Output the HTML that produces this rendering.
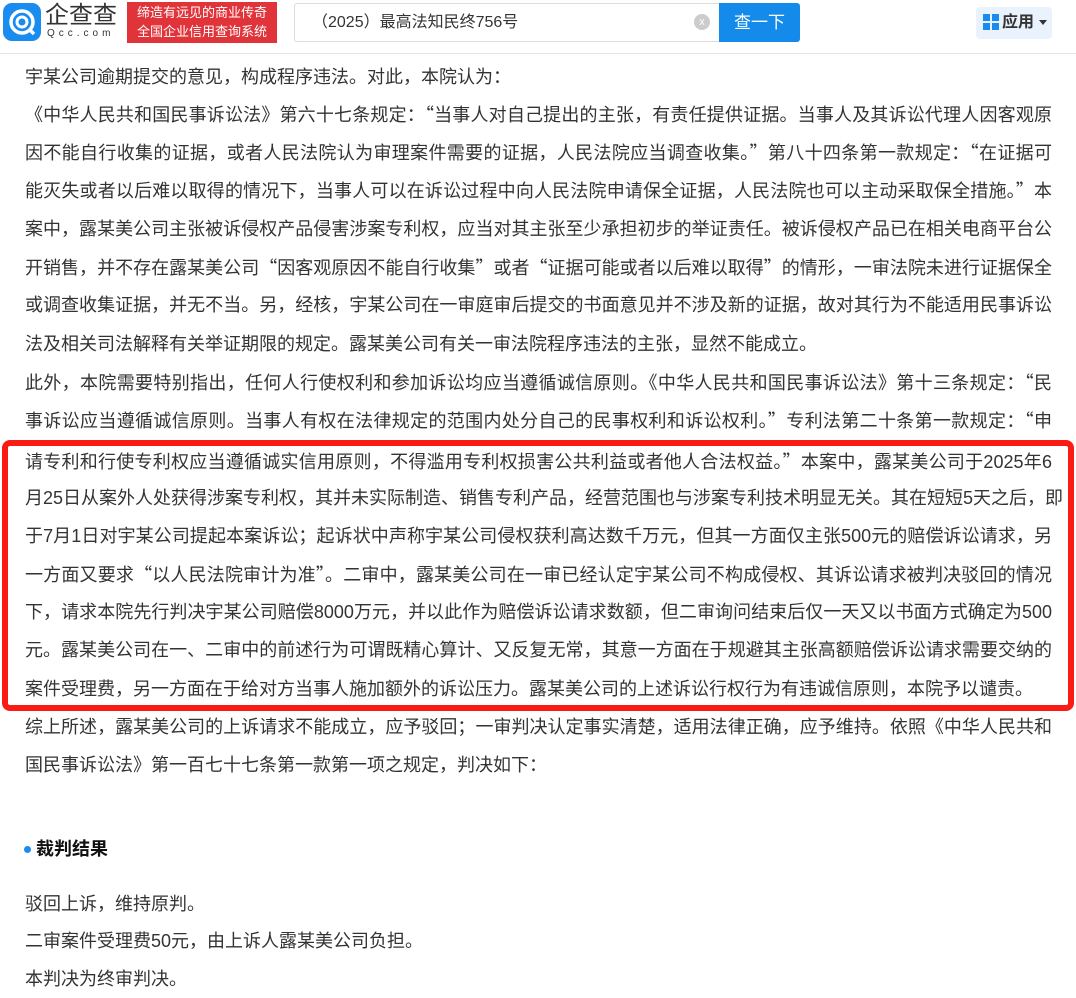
<!DOCTYPE html>
<html><head><meta charset="utf-8"><style>
body{margin:0;width:1076px;height:997px;overflow:hidden;background:#fff;font-family:"Liberation Sans","Noto Sans CJK SC",sans-serif;color:#333;}
.hdr{position:absolute;left:0;top:0;width:1076px;height:53px;border-bottom:1px solid #e4e4e4;background:#fff;}
.l{position:absolute;left:25px;width:1027px;font-size:18px;line-height:38px;height:38px;white-space:nowrap;text-align:justify;text-align-last:justify;}
.nl{text-align-last:left;}
q{quotes:none;font-family:"Noto Sans CJK SC",sans-serif;}
</style></head><body>
<div class="hdr">
 <div style="position:absolute;left:3px;top:3px;width:38px;height:38px;border-radius:9px;background:#1a8cf0;"></div>
 <svg style="position:absolute;left:3px;top:3px" width="38" height="38" viewBox="0 0 38 38"><circle cx="19" cy="19" r="11" fill="none" stroke="#fff" stroke-width="3.5"/><circle cx="19" cy="19" r="5" fill="none" stroke="#fff" stroke-width="3"/><line x1="26" y1="26" x2="31" y2="31" stroke="#fff" stroke-width="3.5"/></svg>
 <div style="position:absolute;left:45px;top:1px;font-size:24px;color:#333;line-height:30px;">企查查</div>
 <div style="position:absolute;left:47px;top:28px;font-size:10px;color:#333;letter-spacing:4px;">Qcc.com</div>
 <div style="position:absolute;left:127px;top:2px;width:150px;height:40px;background:#e0343a;color:#fff;font-size:13px;line-height:19px;text-align:center;padding-top:1px;">缔造有远见的商业传奇<br>全国企业信用查询系统</div>
 <div style="position:absolute;left:294px;top:3px;width:425px;height:37px;border:1px solid #ddd;border-right:none;border-radius:3px 0 0 3px;"></div>
 <div style="position:absolute;left:312px;top:3px;font-size:16px;line-height:39px;color:#333;">（2025）最高法知民终756号</div>
 <div style="position:absolute;left:694px;top:14px;width:16px;height:16px;border-radius:50%;background:#ccc;color:#fff;font-size:11px;line-height:16px;text-align:center;">x</div>
 <div style="position:absolute;left:719px;top:3px;width:81px;height:39px;background:#148bea;border-radius:0 3px 3px 0;color:#fff;font-size:17px;line-height:39px;text-align:center;">查一下</div>
 <div style="position:absolute;left:976px;top:7px;width:76px;height:32px;background:#eaf3fd;border-radius:4px;"></div>
 <div style="position:absolute;left:983px;top:14px;width:7px;height:7px;background:#1a8cf0;"></div>
 <div style="position:absolute;left:992px;top:14px;width:7px;height:7px;background:#1a8cf0;"></div>
 <div style="position:absolute;left:983px;top:23px;width:7px;height:7px;background:#1a8cf0;"></div>
 <div style="position:absolute;left:992px;top:23px;width:7px;height:7px;background:#1a8cf0;"></div>
 <div style="position:absolute;left:1002px;top:7px;font-size:16px;line-height:32px;color:#333;font-weight:bold;">应用</div>
 <div style="position:absolute;left:1039px;top:20px;border-left:4px solid transparent;border-right:4px solid transparent;border-top:5px solid #333;"></div>
</div>

<div class="l nl" style="top:58px">宇某公司逾期提交的意见，构成程序违法。对此，本院认为：</div>
<div class="l" style="top:95px">《中华人民共和国民事诉讼法》第六十七条规定：<q>“</q>当事人对自己提出的主张，有责任提供证据。当事人及其诉讼代理人因客观原</div>
<div class="l" style="top:133px">因不能自行收集的证据，或者人民法院认为审理案件需要的证据，人民法院应当调查收集。<q>”</q>第八十四条第一款规定：<q>“</q>在证据可</div>
<div class="l" style="top:171px">能灭失或者以后难以取得的情况下，当事人可以在诉讼过程中向人民法院申请保全证据，人民法院也可以主动采取保全措施。<q>”</q>本</div>
<div class="l" style="top:210px">案中，露某美公司主张被诉侵权产品侵害涉案专利权，应当对其主张至少承担初步的举证责任。被诉侵权产品已在相关电商平台公</div>
<div class="l" style="top:248px">开销售，并不存在露某美公司<q>“</q>因客观原因不能自行收集<q>”</q>或者<q>“</q>证据可能或者以后难以取得<q>”</q>的情形，一审法院未进行证据保全</div>
<div class="l" style="top:286px">或调查收集证据，并无不当。另，经核，宇某公司在一审庭审后提交的书面意见并不涉及新的证据，故对其行为不能适用民事诉讼</div>
<div class="l nl" style="top:325px">法及相关司法解释有关举证期限的规定。露某美公司有关一审法院程序违法的主张，显然不能成立。</div>
<div class="l" style="top:363px">此外，本院需要特别指出，任何人行使权利和参加诉讼均应当遵循诚信原则。《中华人民共和国民事诉讼法》第十三条规定：<q>“</q>民</div>
<div class="l" style="top:401px">事诉讼应当遵循诚信原则。当事人有权在法律规定的范围内处分自己的民事权利和诉讼权利。<q>”</q>专利法第二十条第一款规定：<q>“</q>申</div>
<div class="l" style="top:442px">请专利和行使专利权应当遵循诚实信用原则，不得滥用专利权损害公共利益或者他人合法权益。<q>”</q>本案中，露某美公司于2025年6</div>
<div class="l" style="top:479px">月25日从案外人处获得涉案专利权，其并未实际制造、销售专利产品，经营范围也与涉案专利技术明显无关。其在短短5天之后，即</div>
<div class="l" style="top:517px">于7月1日对宇某公司提起本案诉讼；起诉状中声称宇某公司侵权获利高达数千万元，但其一方面仅主张500元的赔偿诉讼请求，另</div>
<div class="l" style="top:555px">一方面又要求<q>“</q>以人民法院审计为准<q>”</q>。二审中，露某美公司在一审已经认定宇某公司不构成侵权、其诉讼请求被判决驳回的情况</div>
<div class="l" style="top:593px">下，请求本院先行判决宇某公司赔偿8000万元，并以此作为赔偿诉讼请求数额，但二审询问结束后仅一天又以书面方式确定为500</div>
<div class="l" style="top:631px">元。露某美公司在一、二审中的前述行为可谓既精心算计、又反复无常，其意一方面在于规避其主张高额赔偿诉讼请求需要交纳的</div>
<div class="l nl" style="top:670px">案件受理费，另一方面在于给对方当事人施加额外的诉讼压力。露某美公司的上述诉讼行权行为有违诚信原则，本院予以谴责。</div>
<div class="l" style="top:708px">综上所述，露某美公司的上诉请求不能成立，应予驳回；一审判决认定事实清楚，适用法律正确，应予维持。依照《中华人民共和</div>
<div class="l nl" style="top:746px">国民事诉讼法》第一百七十七条第一款第一项之规定，判决如下：</div>

<div style="position:absolute;left:2px;top:440px;width:1060px;height:259px;border:6px solid #fa1b14;border-radius:8px;"></div>

<div style="position:absolute;left:24px;top:846px;width:7px;height:7px;border-radius:50%;background:#1a8cf0;"></div>
<div class="l nl" style="top:830px;left:36px;font-weight:bold;color:#111;">裁判结果</div>
<div class="l nl" style="top:885px">驳回上诉，维持原判。</div>
<div class="l nl" style="top:922px">二审案件受理费50元，由上诉人露某美公司负担。</div>
<div class="l nl" style="top:960px">本判决为终审判决。</div>
</body></html>
